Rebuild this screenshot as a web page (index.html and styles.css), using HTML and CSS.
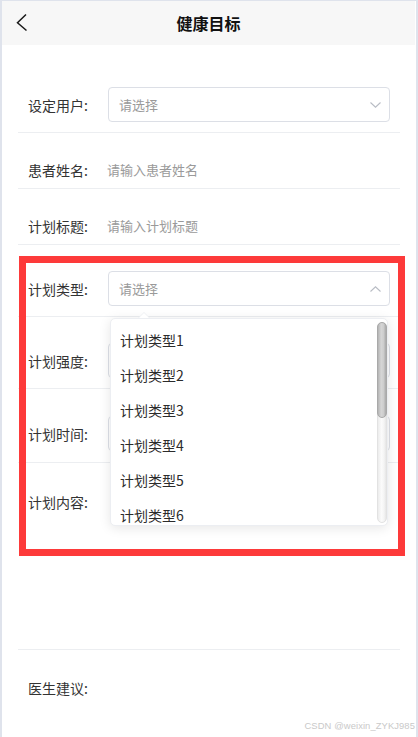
FILE: index.html
```html
<!DOCTYPE html>
<html lang="zh-CN">
<head>
<meta charset="utf-8">
<title>健康目标</title>
<link rel="stylesheet" href="styles.css">
</head>
<body>
<div class="app">
  <header class="nav">
    <svg class="back" width="14" height="20" viewBox="0 0 14 20"><polyline points="10,1.5 1.5,9.7 10.5,17.5" fill="none" stroke="#1a1a1a" stroke-width="1.5"/></svg>
    <h1 class="title">健康目标</h1>
  </header>
  <form class="form">
    <div class="row row-first">
      <label class="label">设定用户:</label>
      <div class="select"><span class="ph">请选择</span><svg class="chev" width="11" height="6" viewBox="0 0 11 6"><polyline points="0.5,0.5 5.5,5.2 10.5,0.5" fill="none" stroke="#b8bcc4" stroke-width="1.1"/></svg></div>
    </div>
    <div class="row row-input">
      <label class="label">患者姓名:</label>
      <input class="input" placeholder="请输入患者姓名">
    </div>
    <div class="row row-input">
      <label class="label">计划标题:</label>
      <input class="input" placeholder="请输入计划标题">
    </div>
    <div class="row row-sel">
      <label class="label">计划类型:</label>
      <div class="select open"><span class="ph">请选择</span><svg class="chev" width="11" height="6" viewBox="0 0 11 6"><polyline points="0.5,5.5 5.5,0.8 10.5,5.5" fill="none" stroke="#b8bcc4" stroke-width="1.1"/></svg>
        <div class="dropdown">
          <span class="arrow"></span>
          <ul class="options">
            <li>计划类型1</li>
            <li>计划类型2</li>
            <li>计划类型3</li>
            <li>计划类型4</li>
            <li>计划类型5</li>
            <li>计划类型6</li>
          </ul>
          <div class="track"><div class="thumb"></div></div>
        </div>
      </div>
    </div>
    <div class="row row-sel">
      <label class="label">计划强度:</label>
      <div class="select"></div>
    </div>
    <div class="row row-sel row-time">
      <label class="label">计划时间:</label>
      <div class="select"></div>
    </div>
    <div class="row row-text">
      <label class="label">计划内容:</label>
    </div>
    <div class="row row-last">
      <label class="label">医生建议:</label>
    </div>
  </form>
  <div class="highlight"></div>
  <div class="watermark">CSDN @weixin_ZYKJ985</div>
</div>
</body>
</html>
```
FILE: styles.css
```css
* { box-sizing: border-box; }
html, body { margin: 0; padding: 0; background: #fff; }
body { font-family: "Noto Sans CJK SC", "Noto Sans", sans-serif; color: #333; }

.app {
  position: relative;
  width: 418px;
  height: 737px;
  overflow: hidden;
  border-top: 1px solid #dfe3ec;
  border-left: 2px solid #dfe3ec;
  border-right: 2px solid #dfe3ec;
  background: #fff;
}

.nav {
  position: relative;
  height: 44px;
  margin-right: 1px;
  background: #f7f7f7;
  display: flex;
  align-items: center;
  justify-content: center;
}
.back { position: absolute; left: 14px; top: 12px; }
.title {
  margin: 0;
  font-size: 16px;
  font-weight: 700;
  color: #111;
  line-height: 22px;
}

.form {
  margin: 0 16px;
  padding-top: 32px;
}
.row {
  display: flex;
  align-items: center;
  padding: 0 10px;
  border-bottom: 1px solid #eceef1;
}
.label {
  width: 80px;
  flex: none;
  font-size: 14px;
  line-height: 20px;
  color: #333;
}
.row-first { padding-top: 10px; padding-bottom: 10px; }
.row-input { padding-top: 27px; padding-bottom: 8px; }
.row-sel { padding-top: 26px; padding-bottom: 10px; }
.row-time { padding-top: 27px; padding-bottom: 11px; }
.row-text { align-items: flex-start; padding-top: 29px; height: 187px; }
.row-last { padding-top: 28px; border-bottom: none; }

.select {
  position: relative;
  flex: 1;
  height: 35px;
  border: 1px solid #dcdfe6;
  border-radius: 4px;
  display: flex;
  align-items: center;
  justify-content: space-between;
  padding: 0 8px 0 10px;
}
.ph { font-size: 13px; color: #9a9a9a; line-height: 20px; }
.chev { display: block; }

.input {
  flex: 1;
  margin-left: -1px;
  border: none;
  outline: none;
  padding: 0;
  font-family: inherit;
  font-size: 13px;
  line-height: 20px;
  height: 20px;
  color: #333;
  background: transparent;
}
.input::placeholder { color: #9a9a9a; }

.dropdown {
  position: absolute;
  left: 1px;
  top: 46px;
  width: 278px;
  height: 208px;
  background: #fff;
  border: 1px solid #eceef2;
  border-radius: 5px;
  box-shadow: 0 2px 12px rgba(0, 0, 0, 0.10);
  z-index: 5;
}
.arrow {
  position: absolute;
  top: -7px;
  left: 27px;
  width: 0;
  height: 0;
  border-left: 6px solid transparent;
  border-right: 6px solid transparent;
  border-bottom: 6px solid #eef0f3;
}
.arrow::after {
  content: "";
  position: absolute;
  left: -5px;
  top: 1px;
  border-left: 5px solid transparent;
  border-right: 5px solid transparent;
  border-bottom: 5px solid #fff;
}
.options {
  list-style: none;
  margin: 0;
  padding: 4px 0 0;
}
.options li {
  height: 35px;
  line-height: 35px;
  padding: 0 9px;
  font-size: 14px;
  color: #2b2b2b;
}
.track {
  position: absolute;
  right: 0;
  top: 3px;
  width: 10px;
  height: 201px;
  border-radius: 5px;
  border: 1px solid #e2e2e2;
  background: linear-gradient(to right, #ececec, #fbfbfb 45%, #f4f4f4 75%, #e6e6e6);
}
.thumb {
  position: absolute;
  left: -1px;
  top: -1px;
  width: 10px;
  height: 96px;
  border-radius: 5px;
  border: 1px solid #a9a9a9;
  background: linear-gradient(to right, #b4b4b4, #d6d6d6 40%, #cdcdcd 70%, #a8a8a8);
}

.highlight {
  position: absolute;
  left: 17px;
  top: 255px;
  width: 386px;
  height: 300px;
  border: 7px solid #fd3a3a;
  z-index: 10;
  pointer-events: none;
}

.watermark {
  position: absolute;
  right: 1px;
  bottom: 5px;
  font-family: "Liberation Sans", Arial, sans-serif;
  font-size: 9.4px;
  line-height: 12px;
  color: #c9c9c9;
  letter-spacing: 0.1px;
}
```
